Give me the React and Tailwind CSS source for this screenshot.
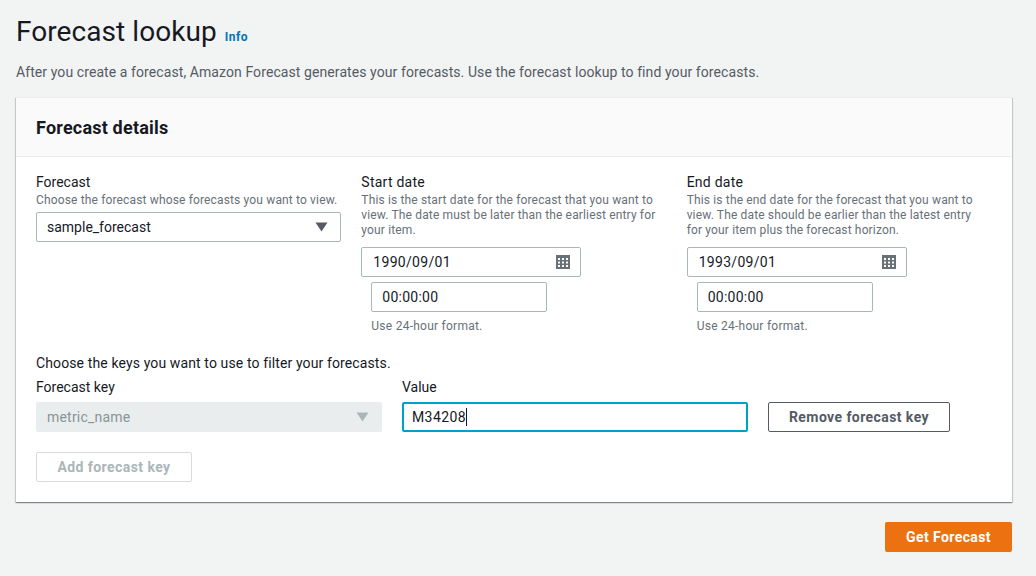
const fontStack = "font-['Roboto',sans-serif]";

function Caret({ disabled = false }) {
  return (
    <svg width="13" height="10" viewBox="0 0 13 10" className="shrink-0">
      <path d="M0.5 0.5h12L6.5 9.5z" fill={disabled ? "#aab7b8" : "#545b64"} />
    </svg>
  );
}

function CalendarIcon() {
  return (
    <svg width="14" height="14" viewBox="0 0 14 14" className="shrink-0">
      <rect width="14" height="14" fill="#687078" />
      <g fill="#ffffff">
        <rect x="2" y="3" width="2" height="2" />
        <rect x="6" y="3" width="2" height="2" />
        <rect x="10" y="3" width="2" height="2" />
        <rect x="2" y="6.5" width="2" height="2" />
        <rect x="6" y="6.5" width="2" height="2" />
        <rect x="10" y="6.5" width="2" height="2" />
        <rect x="2" y="10" width="2" height="2" />
        <rect x="6" y="10" width="2" height="2" />
        <rect x="10" y="10" width="2" height="2" />
      </g>
    </svg>
  );
}

function DateColumn({ label, lines, date }) {
  return (
    <div className="flex flex-col">
      <div className="text-[14px] leading-[21px] tracking-[0.25px] text-[#16191f]">{label}</div>
      <div className="text-[12px] leading-[15px] tracking-[0.15px] text-[#687078]">
        {lines.map((line) => (
          <div key={line} className="whitespace-nowrap">{line}</div>
        ))}
      </div>
      <div className="mt-[9px] flex h-[30px] w-[220px] items-center justify-between rounded-[2px] border border-[#aab7b8] bg-white pl-[11px] pr-[10px] text-[14px] tracking-[0.3px] text-[#16191f]">
        <span>{date}</span>
        <CalendarIcon />
      </div>
      <div className="ml-[10px] mt-[5px] flex h-[30px] w-[176px] items-center rounded-[2px] border border-[#aab7b8] bg-white pl-[10px] text-[14px] tracking-[0.25px] text-[#16191f]">
        00:00:00
      </div>
      <div className="ml-[10px] mt-[6px] text-[12px] leading-[16px] tracking-[0.25px] text-[#687078]">Use 24-hour format.</div>
    </div>
  );
}

export default function App() {
  return (
    <div className={`${fontStack} h-[576px] w-[1036px] overflow-hidden bg-[#f2f3f3] px-4 pt-[14px]`}>
      <div className="flex items-baseline gap-2">
        <h1 className="text-[28px] leading-[36px] tracking-[0.07px] text-[#16191f]">Forecast lookup</h1>
        <a className="text-[12px] font-bold tracking-[0.5px] text-[#0073bb]">Info</a>
      </div>
      <p className="mt-[12px] text-[14px] leading-[20px] tracking-[0.085px] text-[#545b64]">
        After you create a forecast, Amazon Forecast generates your forecasts. Use the forecast lookup to find your forecasts.
      </p>

      <div className="mt-[15px] h-[405px] w-[996px] border-t border-[#eaeded] bg-white shadow-[0_1px_1px_0_rgba(0,28,36,0.3),1px_1px_1px_0_rgba(0,28,36,0.15),-1px_1px_1px_0_rgba(0,28,36,0.15)]">
        <div className="flex h-[59px] items-center border-b border-[#eaeded] bg-[#fafafa] px-5">
          <h2 className="text-[18px] font-bold tracking-[0.2px] text-[#16191f]">Forecast details</h2>
        </div>

        <div className="px-5 pt-[15px]">
          <div className="grid grid-cols-3 gap-5">
            <div className="flex flex-col">
              <div className="text-[14px] leading-[21px] text-[#16191f]">Forecast</div>
              <div className="text-[12px] leading-[15px] tracking-[0.15px] text-[#687078]">Choose the forecast whose forecasts you want to view.</div>
              <div className="mt-[4px] flex h-[30px] items-center justify-between rounded-[2px] border border-[#aab7b8] bg-white pl-[10px] pr-[12px] text-[14px] text-[#16191f]">
                <span>sample_forecast</span>
                <Caret />
              </div>
            </div>
            <DateColumn
              label="Start date"
              date="1990/09/01"
              lines={[
                "This is the start date for the forecast that you want to",
                "view. The date must be later than the earliest entry for",
                "your item.",
              ]}
            />
            <DateColumn
              label="End date"
              date="1993/09/01"
              lines={[
                "This is the end date for the forecast that you want to",
                "view. The date should be earlier than the latest entry",
                "for your item plus the forecast horizon.",
              ]}
            />
          </div>

          <div className="mt-[19px] text-[14px] leading-[20px] tracking-[0.12px] text-[#16191f]">Choose the keys you want to use to filter your forecasts.</div>

          <div className="mt-[4px] flex">
            <div className="w-[346px]">
              <div className="text-[14px] leading-[20px] text-[#16191f]">Forecast key</div>
              <div className="mt-[5px] flex h-[30px] items-center justify-between rounded-[2px] bg-[#eaeded] pl-[11px] pr-[13px] text-[14px] tracking-[0.2px] text-[#879596]">
                <span>metric_name</span>
                <Caret disabled />
              </div>
            </div>
            <div className="ml-5 w-[346px]">
              <div className="text-[14px] leading-[20px] text-[#16191f]">Value</div>
              <div className="mt-[5px] flex h-[30px] items-center rounded-[2px] border-2 border-[#00a1c9] bg-white pl-[8px] text-[14px] tracking-[0.4px] text-[#16191f]">
                <span>M34208</span>
                <span className="h-[18px] w-px bg-[#16191f]" />
              </div>
            </div>
            <button className="ml-5 mt-[25px] h-[30px] w-[182px] rounded-[2px] border border-[#545b64] bg-white text-[14px] font-bold tracking-[0.42px] text-[#545b64]">
              Remove forecast key
            </button>
          </div>

          <button className="mt-5 h-[30px] w-[156px] rounded-[2px] border border-[#d5dbdb] bg-white text-[14px] font-bold tracking-[0.44px] text-[#aab7b8]">
            Add forecast key
          </button>
        </div>
      </div>

      <div className="mt-5 flex w-[996px] justify-end">
        <button className="h-[30px] w-[127px] rounded-[2px] bg-[#ec7211] text-[14px] font-bold tracking-[0.42px] text-white">Get Forecast</button>
      </div>
    </div>
  );
}
